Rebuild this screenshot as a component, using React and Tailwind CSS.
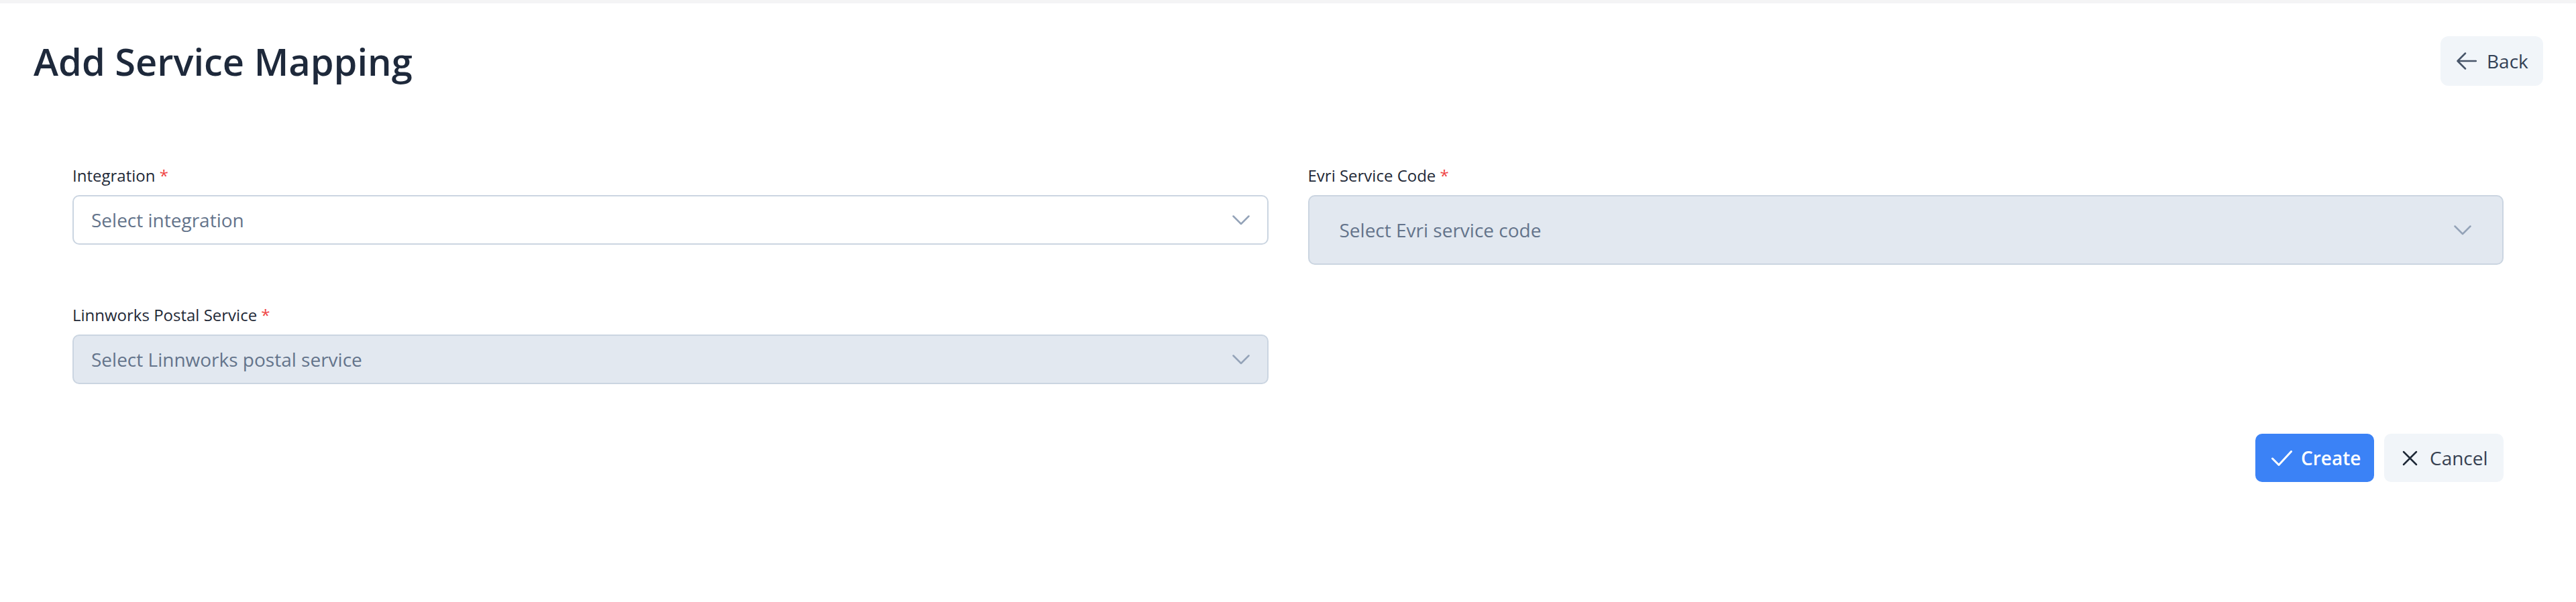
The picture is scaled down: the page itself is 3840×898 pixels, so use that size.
import React from 'react';

const Chevron = () => (
  <svg width="26" height="15" viewBox="0 0 26 15" fill="none">
    <polyline points="1.5,1.5 13,13 24.5,1.5" stroke="#94a3b8" strokeWidth="2.5" strokeLinecap="round" strokeLinejoin="round" />
  </svg>
);

const Label = ({ children }) => (
  <label className="block mb-[13px] text-[24px] leading-[32px] font-medium text-[#1f2937]">
    {children} <span className="text-[#ef4444]">*</span>
  </label>
);

const App = () => {
  return (
    <div className="min-h-screen bg-white" style={{ fontFamily: '"Open Sans", "Noto Sans", sans-serif' }}>
      <div className="h-[5px] bg-[#f4f4f5]"></div>

      {/* header */}
      <div className="flex items-center justify-between pt-[49px] pl-[50px] pr-[49px]">
        <h1 className="text-[56px] leading-[74px] font-semibold text-[#1e293b]">Add Service Mapping</h1>
        <button className="flex items-center gap-[15px] h-[74px] w-[153px] pl-[24px] rounded-[12px] bg-[#f1f5f9] text-[28px] text-[#334155]">
          <svg width="30" height="26" viewBox="0 0 30 26" fill="none">
            <path d="M29 13H2M13 1.5 1.5 13 13 24.5" stroke="#475569" strokeWidth="2.5" strokeLinecap="round" strokeLinejoin="round" />
          </svg>
          Back
        </button>
      </div>

      {/* form */}
      <div className="pt-[118px] px-[108px]">
        <div className="grid grid-cols-2 gap-x-[59px] gap-y-[59px] items-start">
          <div>
            <Label>Integration</Label>
            <div className="flex items-center justify-between h-[74px] pl-[26px] pr-[26px] rounded-[10px] border-2 border-[#cbd5e1] bg-white">
              <span className="text-[28px] text-[#64748b]">Select integration</span>
              <Chevron />
            </div>
          </div>
          <div>
            <Label>Evri Service Code</Label>
            <div className="flex items-center justify-between h-[104px] pl-[45px] pr-[46px] rounded-[10px] border-2 border-[#cbd5e1] bg-[#e2e8f0]">
              <span className="text-[28px] text-[#64748b]">Select Evri service code</span>
              <Chevron />
            </div>
          </div>
          <div>
            <Label>Linnworks Postal Service</Label>
            <div className="flex items-center justify-between h-[74px] pl-[26px] pr-[26px] rounded-[10px] border-2 border-[#cbd5e1] bg-[#e2e8f0]">
              <span className="text-[28px] text-[#64748b]">Select Linnworks postal service</span>
              <Chevron />
            </div>
          </div>
        </div>

        <div className="flex justify-end gap-[15px] mt-[74px]">
          <button className="flex items-center gap-[13px] h-[72px] w-[177px] pl-[24px] rounded-[10px] bg-[#3b82f6] text-white text-[28px] font-semibold">
            <svg width="31" height="23" viewBox="0 0 31 23" fill="none">
              <path d="M1.5 12 11 21.5 29.5 1.5" stroke="white" strokeWidth="3" strokeLinecap="round" strokeLinejoin="round" />
            </svg>
            Create
          </button>
          <button className="flex items-center gap-[18px] h-[72px] w-[178px] pl-[27px] rounded-[10px] bg-[#f1f5f9] text-[#374151] text-[28px]">
            <svg width="23" height="23" viewBox="0 0 23 23" fill="none">
              <path d="M2 2 21 21M21 2 2 21" stroke="#1f2937" strokeWidth="2.5" strokeLinecap="round" />
            </svg>
            Cancel
          </button>
        </div>
      </div>
    </div>
  );
};

export default App;
